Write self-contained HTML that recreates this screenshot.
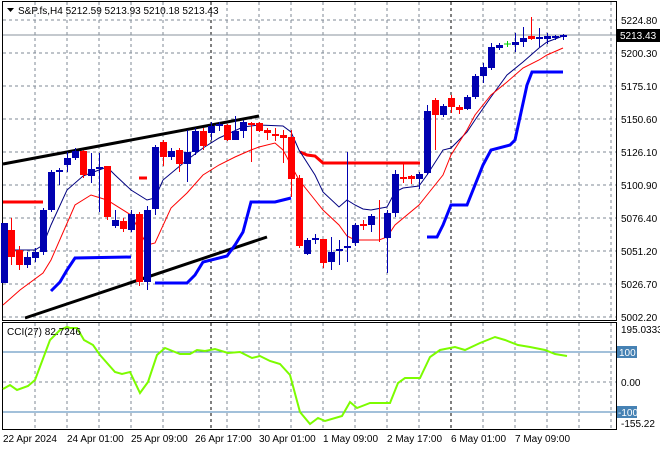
<!DOCTYPE html><html><head><style>body{margin:0;background:#fff}svg{display:block;font-family:"Liberation Sans",sans-serif;font-size:10px}</style></head><body>
<svg width="660" height="450" xmlns="http://www.w3.org/2000/svg">
<rect width="660" height="450" fill="#fff"/>
<g stroke="#7f8a96" stroke-dasharray="3,3" stroke-width="1">
<path d="M35 2V320M67 2V320M99 2V320M131 2V320M163 2V320M227 2V320M259 2V320M291 2V320M323 2V320M355 2V320M387 2V320M419 2V320M483 2V320M515 2V320M547 2V320M579 2V320M611 2V320"/>
<path d="M35 323V429M67 323V429M99 323V429M131 323V429M163 323V429M227 323V429M259 323V429M291 323V429M323 323V429M355 323V429M387 323V429M419 323V429M483 323V429M515 323V429M547 323V429M579 323V429M611 323V429"/>
<path d="M3 20H616M3 53H616M3 86H616M3 119H616M3 152H616M3 185H616M3 218H616M3 251H616M3 284H616M3 317H616M3 382H616"/>
</g>
<g stroke="#000" stroke-dasharray="3,3"><path d="M211 2V320M451 2V320M211 323V429M451 323V429"/></g>
<path d="M3 35H616" stroke="#8a939c"/>
<path d="M3 352H616M3 412H616" stroke="#4682b4"/>
<rect x="2.5" y="1.5" width="614" height="319" fill="none" stroke="#000"/>
<rect x="2.5" y="322.5" width="614" height="107" fill="none" stroke="#000"/>
<g stroke="#000" stroke-width="3"><path d="M3 164L259 116M25 318L267 237"/></g>
<polyline fill="none" stroke="#ff0000" stroke-width="3" points="3,202 43,202"/>
<polyline fill="none" stroke="#ff0000" stroke-width="3" points="139,178 147,178"/>
<polyline fill="none" stroke="#ff0000" stroke-width="3" points="300,152 307,155 315,156 323,163 420,163"/>
<polyline fill="none" stroke="#0000ff" stroke-width="3" points="51,291 60,282 67,270 75,258 131,257"/>
<polyline fill="none" stroke="#0000ff" stroke-width="3" points="155,283 187,283 195,275 203,262 227,256 235,245 243,232 251,202 275,202 283,200 291,198"/>
<polyline fill="none" stroke="#0000ff" stroke-width="3" points="427,237 437,237 443,225 451,205 467,205 483,165 491,150 510,145 515,140 527,85 532,72 563,72"/>
<polyline fill="none" stroke="#000080" stroke-width="1" points="5,250 35,250 43,245 51,225 67,190 83,176 99,170 107,167 115,175 131,190 147,200 155,198 163,180 187,160 203,148 219,138 243,127 259,125 283,126 291,132 299,150 315,175 323,192 339,207 347,200 355,205 363,209 371,210 387,207 395,192 403,188 419,186 427,175 443,150 451,148 467,132 475,120 491,97 507,75 523,62 539,48 547,42 563,36"/>
<polyline fill="none" stroke="#ff0000" stroke-width="1" points="3,305 20,290 43,273 51,260 75,205 91,195 107,200 131,215 147,245 155,243 171,208 187,193 203,175 219,165 235,157 251,150 259,147 275,143 283,150 291,165 299,180 315,200 323,210 339,225 347,236 355,240 379,240 387,237 395,225 419,205 427,195 443,175 451,155 467,130 475,115 491,95 507,82 523,68 539,60 547,55 563,48"/>
<path stroke="#0000b0" fill="none" d="M4.5 223V283M27.5 252V268M35.5 248V262M43.5 208V255M51.5 170V212M59.5 168V185M67.5 152V172M75.5 148V160M91.5 153V183M99.5 153V212M115.5 210V228M131.5 210V232M147.5 206V290M155.5 145V215M171.5 148V160M187.5 130V182M195.5 128V155M211.5 122V140M219.5 122V131M235.5 116V140M243.5 120V138M307.5 238V255M315.5 234V244M331.5 237V270M339.5 240V265M347.5 152V262M355.5 223V246M371.5 214V232M387.5 210V273M395.5 170V217M419.5 172V189M427.5 105V175M443.5 104V117M467.5 95V110M475.5 74V99M483.5 63V83M491.5 43V70M499.5 43V50M515.5 33V52M523.5 27V47M539.5 28V47M547.5 33V44M555.5 35V40M563.5 34V40"/>
<path stroke="#0000b0" stroke-width="2" d="M56 171h7M96 168h7M216 125h7M312 239h7M336 250h7M344 247h7M552 37h7M560 36h7"/>
<g fill="#0000b0">
<rect x="1" y="223" width="7" height="60"/><rect x="24" y="257" width="7" height="8"/><rect x="32" y="252" width="7" height="6"/><rect x="40" y="210" width="7" height="42"/><rect x="48" y="172" width="7" height="38"/><rect x="64" y="158" width="7" height="7"/><rect x="72" y="151" width="7" height="7"/><rect x="88" y="169" width="7" height="7"/><rect x="112" y="220" width="7" height="6"/><rect x="128" y="214" width="7" height="16"/><rect x="144" y="210" width="7" height="72"/><rect x="152" y="147" width="7" height="62"/><rect x="168" y="151" width="7" height="6"/><rect x="184" y="152" width="7" height="12"/><rect x="192" y="131" width="7" height="21"/><rect x="208" y="126" width="7" height="7"/><rect x="232" y="131" width="7" height="9"/><rect x="240" y="122" width="7" height="9"/><rect x="304" y="240" width="7" height="14"/><rect x="328" y="252" width="7" height="10"/><rect x="352" y="225" width="7" height="18"/><rect x="368" y="216" width="7" height="9"/><rect x="384" y="213" width="7" height="25"/><rect x="392" y="174" width="7" height="39"/><rect x="416" y="174" width="7" height="5"/><rect x="424" y="111" width="7" height="62"/><rect x="440" y="106" width="7" height="9"/><rect x="464" y="97" width="7" height="12"/><rect x="472" y="76" width="7" height="21"/><rect x="480" y="67" width="7" height="9"/><rect x="488" y="47" width="7" height="21"/><rect x="496" y="45" width="7" height="3"/><rect x="512" y="42" width="7" height="3"/><rect x="520" y="38" width="7" height="4"/><rect x="536" y="37" width="7" height="2"/><rect x="544" y="36" width="7" height="3"/>
</g>
<path stroke="#ff0000" fill="none" d="M11.5 218V265M19.5 246V270M83.5 150V178M107.5 166V220M123.5 218V232M139.5 212V286M163.5 140V166M179.5 148V172M203.5 128V150M227.5 124V141M251.5 122V162M259.5 122V132M267.5 128V140M275.5 128V141M283.5 130V163M291.5 130V197M299.5 175V248M323.5 239V268M363.5 220V230M379.5 200V242M403.5 163V183M411.5 175V184M435.5 98V150M451.5 95V113M459.5 105V114M531.5 17V40"/>
<path stroke="#ff0000" stroke-width="2" d="M248 124h7M272 135h7M360 225h7M400 178h7"/>
<g fill="#ff0000">
<rect x="8" y="230" width="7" height="27"/><rect x="16" y="250" width="7" height="15"/><rect x="80" y="151" width="7" height="24"/><rect x="104" y="166" width="7" height="51"/><rect x="120" y="221" width="7" height="8"/><rect x="136" y="214" width="7" height="68"/><rect x="160" y="142" width="7" height="15"/><rect x="176" y="150" width="7" height="14"/><rect x="200" y="131" width="7" height="15"/><rect x="224" y="125" width="7" height="15"/><rect x="256" y="123" width="7" height="8"/><rect x="264" y="130" width="7" height="3"/><rect x="280" y="135" width="7" height="3"/><rect x="288" y="137" width="7" height="42"/><rect x="296" y="178" width="7" height="68"/><rect x="320" y="239" width="7" height="24"/><rect x="408" y="176" width="7" height="3"/><rect x="432" y="100" width="7" height="15"/><rect x="448" y="98" width="7" height="9"/><rect x="456" y="107" width="7" height="3"/><rect x="528" y="36" width="7" height="3"/>
</g>
<path stroke="#00d000" d="M507.5 41V47M504 44h7"/>
<polyline fill="none" stroke="#7cfc00" stroke-width="2" points="3,389 10,385 17,390 28,386 35,380 50,340 60,330 67,327 70,328 77,328 84,340 93,345 100,355 115,372 122,374 130,372 140,393 148,382 157,355 165,348 170,350 180,354 190,354 197,350 205,351 215,349 228,353 240,352 252,358 260,356 270,361 280,364 290,375 300,412 310,424 318,418 325,421 342,416 350,402 357,408 370,403 390,403 398,383 405,378 420,378 430,357 440,350 455,347 465,350 480,343 495,337 505,340 518,345 530,347 545,350 555,354 567,356"/>
<path d="M7 8h7l-3.5 4z" fill="#000"/>
<text x="18" y="14" fill="#000">S&amp;P.fs,H4  5212.59 5213.93 5210.18 5213.43</text>
<text x="7" y="335" fill="#000">CCI(27) 82.7246</text>
<g fill="#000">
<text x="621" y="24">5224.80</text><text x="621" y="57">5200.30</text><text x="621" y="90">5175.10</text><text x="621" y="123">5150.60</text><text x="621" y="156">5126.10</text><text x="621" y="189">5100.90</text><text x="621" y="222">5076.40</text><text x="621" y="255">5051.20</text><text x="621" y="288">5026.70</text><text x="621" y="321">5002.20</text>
<text x="621" y="333">195.0333</text><text x="621" y="386">0.00</text><text x="621" y="427">-155.22</text>
</g>
<rect x="617" y="29" width="43" height="13" fill="#000"/><text x="620" y="39" fill="#fff">5213.43</text>
<rect x="617" y="346" width="20" height="12" fill="#4682b4"/><text x="619" y="356" fill="#fff">100</text>
<rect x="617" y="406" width="20" height="12" fill="#4682b4"/><text x="618" y="416" fill="#fff">-100</text>
<g fill="#000"><text x="3" y="442">22 Apr 2024</text><text x="67" y="442">24 Apr 01:00</text><text x="131" y="442">25 Apr 09:00</text><text x="195" y="442">26 Apr 17:00</text><text x="259" y="442">30 Apr 01:00</text><text x="323" y="442">1 May 09:00</text><text x="387" y="442">2 May 17:00</text><text x="451" y="442">6 May 01:00</text><text x="515" y="442">7 May 09:00</text></g>
</svg></body></html>
